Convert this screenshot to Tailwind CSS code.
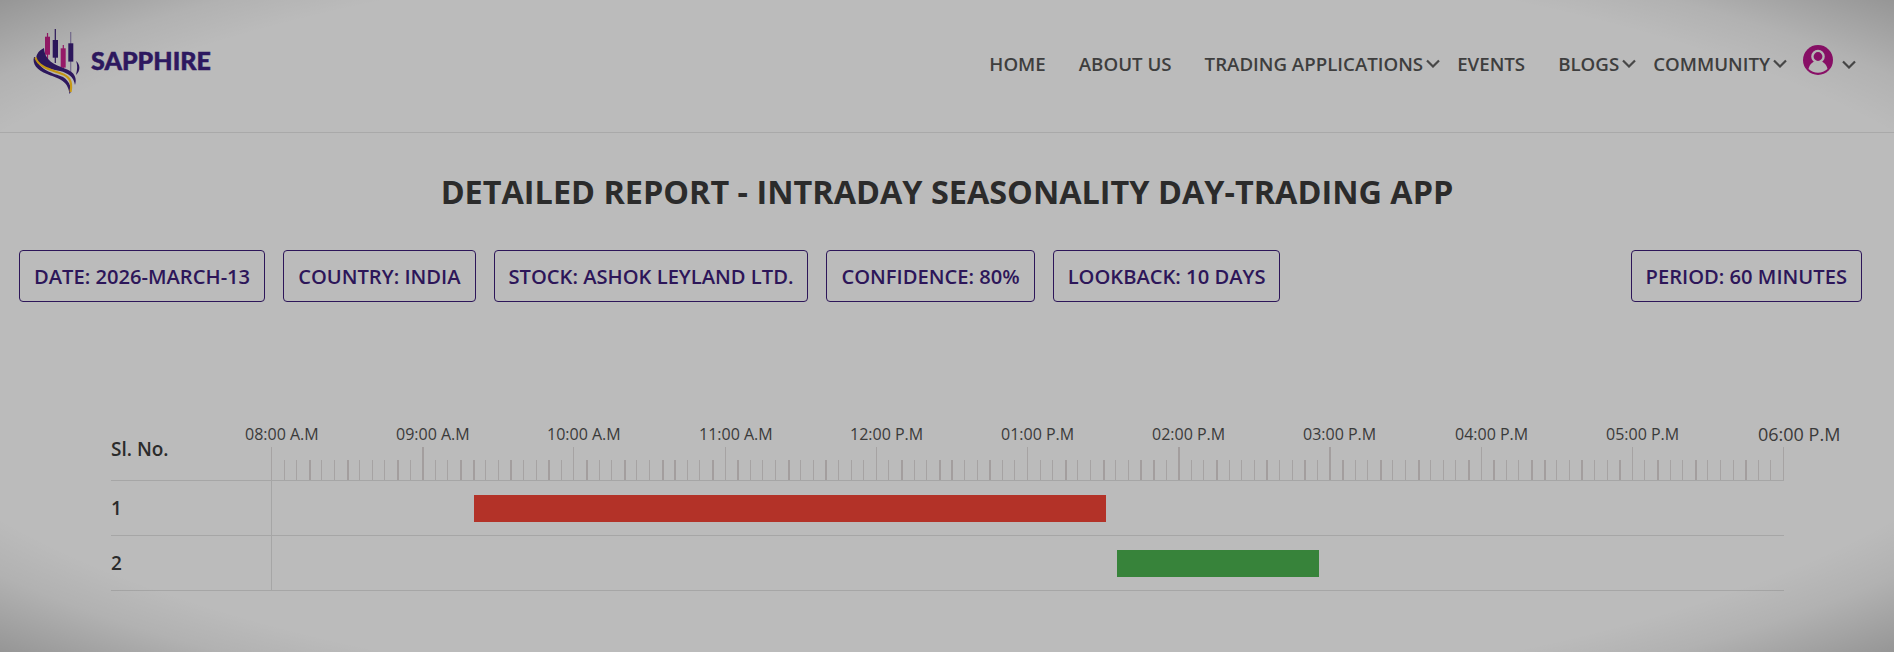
<!DOCTYPE html>
<html lang="en">
<head>
  <meta charset="UTF-8">
  <meta name="viewport" content="width=device-width, initial-scale=1.0">
  <title>Detailed Report</title>
  <script src="https://cdn.jsdelivr.net/npm/@tailwindcss/browser@4"></script>
</head>
<body class="relative h-[652px] overflow-hidden bg-[#bbbbbb] font-['Open_Sans',sans-serif]">
  <header class="flex h-[133px] items-start justify-between border-b border-[#a9a9a9] pl-[20px] pr-[38px]">
    <a class="mt-[20px] flex items-start">
      <svg class="h-[75px] w-[70px] blur-[0.3px]" viewBox="0 0 70 75">
        <path d="M27.5 13v26M43.3 25v25" stroke="#9c1a6c" stroke-width="1.2"/>
        <path d="M35.3 9v34" stroke="#2e1860" stroke-width="1.2"/>
        <path d="M50.7 12v43" stroke="#7a7095" stroke-width="1.2"/>
        <rect x="25" y="16.7" width="5" height="18" fill="#9c1a6c"/>
        <rect x="32.7" y="20" width="5.3" height="17.7" fill="#2e1860"/>
        <rect x="40.7" y="28.3" width="5" height="19.3" fill="#9c1a6c"/>
        <rect x="48.3" y="23.3" width="5" height="18.3" fill="#2e1860"/>
        <path d="M24 28C18 31 15 36 17 40C20 47 30 49 40 51C48 53 54 57 55 65C57 59 55 54 50 51C42 46 25 45 24 28Z" fill="#2e1860"/>
        <path d="M14 37C12 44 17 50 27 54C36 58 48 59 49.5 74C53 71 50 61 43 57C33 53 20 51 15 37Z" fill="#2e1860"/>
        <path d="M15.500 37.500C18 47 32 50 41 53.500C48 56 53 60 50.500 72" fill="none" stroke="#c99a14" stroke-width="2.2"/>
        <path d="M56 41C60 44 61 50 56 55C57 50 58 46 56 41Z" fill="#2e1860"/>
      </svg>
      <span class="ml-[1px] mt-[23px] font-['Lato',sans-serif] text-[25px] leading-[34px] font-black text-[#2e1860] [-webkit-text-stroke:0.5px_#2e1860]">SAPPHIRE</span>
    </a>
    <nav class="mt-[49px] flex h-[30px] items-center text-[18.7px] font-semibold text-[#3e3e3e]">
      <a class="mr-[33px]">HOME</a>
      <a class="mr-[33px]">ABOUT US</a>
      <a class="flex items-center">TRADING APPLICATIONS
        <svg class="ml-[3px] mr-[17px] h-[9px] w-[14px]" viewBox="0 0 14 9" fill="none" stroke="#484848" stroke-width="2.2"><path d="M1 1.500l6 6 6-6"/></svg>
      </a>
      <a class="mr-[33px]">EVENTS</a>
      <a class="flex items-center">BLOGS
        <svg class="ml-[3px] mr-[17px] h-[9px] w-[14px]" viewBox="0 0 14 9" fill="none" stroke="#484848" stroke-width="2.2"><path d="M1 1.500l6 6 6-6"/></svg>
      </a>
      <a class="flex items-center">COMMUNITY
        <svg class="ml-[3px] mr-[16px] h-[9px] w-[14px]" viewBox="0 0 14 9" fill="none" stroke="#484848" stroke-width="2.2"><path d="M1 1.500l6 6 6-6"/></svg>
      </a>
      <svg class="-mt-[8px] h-[30px] w-[30px]" viewBox="0 0 30 30">
        <circle cx="15" cy="15" r="15" fill="#8c0f69"/>
        <circle cx="15" cy="11.500" r="5.600" fill="none" stroke="#bbbbbb" stroke-width="2.400"/>
        <path d="M5.500 24c1-5 4.500-7 6.500-7.400 2 1 4 1 6 0 2 .4 5.500 2.400 6.500 7.400-2.600 2.400-6 3.700-9.500 3.700s-6.900-1.300-9.500-3.700z" fill="#bbbbbb"/>
      </svg>
      <svg class="ml-[9px] h-[9px] w-[14px]" viewBox="0 0 14 9" fill="none" stroke="#484848" stroke-width="2.2"><path d="M1 1.500l6 6 6-6"/></svg>
    </nav>
  </header>

  <main>
    <h1 class="mt-[37px] text-center text-[32.4px] leading-[42px] font-bold text-[#2b2b2b]">DETAILED REPORT - INTRADAY SEASONALITY DAY-TRADING APP</h1>

    <div class="mt-[38px] flex justify-between pl-[19px] pr-[32px] text-[20.15px] font-semibold text-[#2d1659]">
      <div class="flex gap-[18px]">
        <span class="flex h-[52px] items-center rounded border border-[#2d1659] px-[14px]">DATE: 2026-MARCH-13</span>
        <span class="flex h-[52px] items-center rounded border border-[#2d1659] px-[14px]">COUNTRY: INDIA</span>
        <span class="flex h-[52px] items-center rounded border border-[#2d1659] px-[14px]">STOCK: ASHOK LEYLAND LTD.</span>
        <span class="flex h-[52px] items-center rounded border border-[#2d1659] px-[14px]">CONFIDENCE: 80%</span>
        <span class="flex h-[52px] items-center rounded border border-[#2d1659] px-[14px]">LOOKBACK: 10 DAYS</span>
      </div>
      <span class="flex h-[52px] items-center rounded border border-[#2d1659] px-[14px]">PERIOD: 60 MINUTES</span>
    </div>

    <section class="ml-[111px] mt-[118px] w-[1673px] text-[#2b2b2b]">
      <div class="flex h-[61px] border-b border-[#a6a6a6]">
        <div class="w-[160px] pt-[17px] text-[19px] leading-[24px] font-semibold">Sl. No.</div>
        <div id="axis" class="relative flex-1"></div>
      </div>
      <div class="flex h-[55px] border-b border-[#a6a6a6]">
        <div class="flex w-[160px] items-center text-[19px] font-semibold">1</div>
        <div class="relative flex-1 border-l border-[#a6a6a6]">
          <div class="absolute left-[202px] top-[14px] h-[27px] w-[632px] bg-[#b33228]"></div>
        </div>
      </div>
      <div class="flex h-[55px] border-b border-[#a6a6a6]">
        <div class="flex w-[160px] items-center text-[19px] font-semibold">2</div>
        <div class="relative flex-1 border-l border-[#a6a6a6]">
          <div class="absolute left-[845px] top-[14px] h-[27px] w-[202px] bg-[#37833a]"></div>
        </div>
      </div>
    </section>
  </main>

  <!-- darker corners of the backdrop -->
  <div class="pointer-events-none absolute inset-0 bg-[radial-gradient(ellipse_at_center,transparent_82%,rgba(0,0,0,0.05)_89%,rgba(0,0,0,0.2)_100%)]"></div>

  <script>
    const axis = document.getElementById("axis");
    const hours = ["08:00 A.M", "09:00 A.M", "10:00 A.M", "11:00 A.M", "12:00 P.M", "01:00 P.M", "02:00 P.M", "03:00 P.M", "04:00 P.M", "05:00 P.M", "06:00 P.M"];
    const pitch = 12.6;
    // ticks that the browser painted 2px wide in the original
    const wide = [3,6,10,12,15,16,19,22,25,28,31,32,35,37,41,44,50,53,54,57,63,66,69,70,72,75,79,82,84,85,88,91,95,97,100,101,104,107,110,113,117];

    for (let i = 0; i <= 120; i++) {
      const tick = document.createElement("div");
      const isHour = i % 12 === 0;
      tick.className = "absolute bottom-0 " +
        (isHour ? "h-[33px] " : "h-[20px] ") +
        (wide.includes(i) ? "w-[2px] bg-[#a39e9e]" : "w-[1px] bg-[#a6a3a3]");
      tick.style.left = Math.round(i * pitch) + "px";
      axis.appendChild(tick);
    }

    hours.forEach((label, index) => {
      const text = document.createElement("div");
      const last = index === hours.length - 1;
      text.className = "absolute top-[3px] whitespace-nowrap leading-[22px] text-[#3a3a3a] " + (last ? "text-[18px] ml-[1px]" : "text-[16px]");
      text.style.left = Math.round(index * 12 * pitch - 26) + "px";
      text.textContent = label;
      axis.appendChild(text);
    });
  </script>
</body>
</html>
